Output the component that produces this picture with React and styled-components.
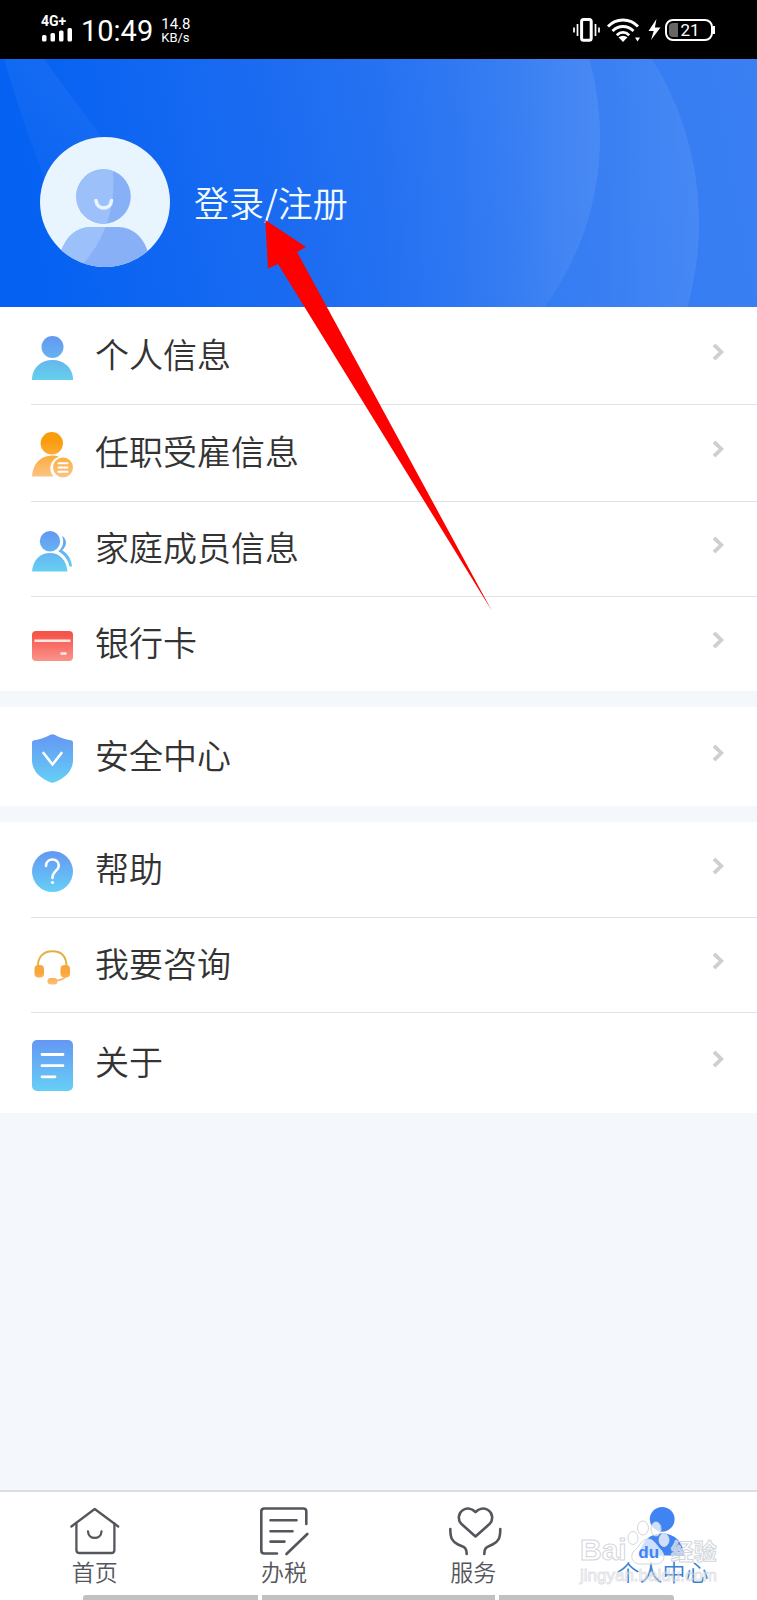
import React from 'react'
import styled, { createGlobalStyle } from 'styled-components'

const GlobalStyle = createGlobalStyle`
    * {
        box-sizing: border-box;
    }
    body {
        margin: 0;
        background: #f4f7fb;
        font-family: "Noto Sans CJK SC", "Noto Sans", sans-serif;
    }
    svg {
        display: block;
    }
`

const BlueGradient = ({ id }) => (
    <linearGradient id={id} x1="0" y1="0" x2="0" y2="1">
        <stop offset="0" stopColor="#6497f3" />
        <stop offset="1" stopColor="#66cff6" />
    </linearGradient>
)

const PersonIcon = () => (
    <svg width="42" height="44" viewBox="0 0 42 44">
        <defs>
            <linearGradient id="person" gradientUnits="userSpaceOnUse" x1="0" y1="0" x2="0" y2="44">
                <stop offset="0" stopColor="#6497f3" />
                <stop offset="1" stopColor="#66d0ea" />
            </linearGradient>
        </defs>
        <g fill="url(#person)">
            <circle cx="20.5" cy="11" r="11" />
            <path d="M0 44v-2C1 31 9.500 24 20.500 24S40 31 41 42v2z" />
        </g>
    </svg>
)

const JobIcon = () => (
    <svg width="42" height="46" viewBox="0 0 42 46">
        <defs>
            <linearGradient id="job" gradientUnits="userSpaceOnUse" x1="0" y1="0" x2="0" y2="46">
                <stop offset="0.2" stopColor="#fa9d0c" />
                <stop offset="1" stopColor="#fbc588" />
            </linearGradient>
        </defs>
        <g fill="url(#job)">
            <circle cx="19.8" cy="11.3" r="11.2" />
            <path d="M0 44.500C.5 32 9 23.500 20 23.500c3 0 5 .4 7 1.200a12 12 0 0 0-5.500 19.800z" />
            <circle cx="31" cy="35.500" r="10" />
        </g>
        <path d="M26.500 31.300h9M26.500 35.500h9M26.500 39.700h9" stroke="#fff" strokeWidth="2" strokeLinecap="round" />
    </svg>
)

const FamilyIcon = () => (
    <svg width="42" height="41" viewBox="0 0 42 41">
        <defs>
            <linearGradient id="family" gradientUnits="userSpaceOnUse" x1="0" y1="0" x2="0" y2="41">
                <stop offset="0" stopColor="#6497f3" />
                <stop offset="1" stopColor="#66d0f2" />
            </linearGradient>
        </defs>
        <g fill="url(#family)">
            <circle cx="18" cy="10.300" r="10.200" />
            <path d="M0 40.500C1 29 8 22 18 22s16.500 7.500 17.500 18.500z" />
            <path d="M30 4.800c5.300 3.600 5.300 10 .2 14.500C36 23 39.500 28.500 40 35.500h-2.500C36 28.500 32 23.500 26.300 20.300 31 16.500 32.500 11 30 4.800z" />
        </g>
    </svg>
)

const CardIcon = () => (
    <svg width="42" height="30" viewBox="0 0 42 30">
        <defs>
            <linearGradient id="card" x1="0" y1="0" x2="0" y2="1">
                <stop offset="0.1" stopColor="#f65349" />
                <stop offset="1" stopColor="#fa948b" />
            </linearGradient>
        </defs>
        <rect width="41" height="30" rx="4" fill="url(#card)" />
        <path d="M2.500 9.800h36" stroke="#fde9e4" strokeWidth="2.600" />
        <path d="M28.500 22.500h6" stroke="#fde9e4" strokeWidth="2.600" />
    </svg>
)

const ShieldIcon = () => (
    <svg width="42" height="49" viewBox="0 0 42 49">
        <defs><BlueGradient id="shield" /></defs>
        <path d="M18.500.7q2-.8 4 0C28 3.500 33 5.300 39 6.300q2 .3 2 2.200v18C41 37 32 45 22 48.500q-1.500.5-3 0C9 45 0 37 0 26.500v-18q0-1.900 2-2.200C8 5.300 13 3.500 18.500.7z" fill="url(#shield)" />
        <path d="M11.500 19l9 11.500 9-11.500" fill="none" stroke="#fff" strokeWidth="2.600" strokeLinecap="round" />
    </svg>
)

const HelpIcon = () => (
    <svg width="42" height="41" viewBox="0 0 42 41">
        <defs><BlueGradient id="help" /></defs>
        <circle cx="20.500" cy="20.500" r="20.500" fill="url(#help)" />
        <path d="M14 15c0-8.500 12.800-8.500 12.800-.5 0 5.500-6.300 5-6.300 12.500" fill="none" stroke="#fff" strokeWidth="2.600" strokeLinecap="round" />
        <circle cx="20.500" cy="31.500" r="1.600" fill="#fff" />
    </svg>
)

const HeadsetIcon = () => (
    <svg width="42" height="35" viewBox="0 0 42 35">
        <defs>
            <linearGradient id="headset" gradientUnits="userSpaceOnUse" x1="0" y1="0" x2="0" y2="35">
                <stop offset="0.2" stopColor="#e8a93a" />
                <stop offset="0.65" stopColor="#fca63c" />
                <stop offset="1" stopColor="#fcc07c" />
            </linearGradient>
        </defs>
        <path d="M5.800 17C5.800 7 11 1.200 20.500 1.200S34.500 7 34.500 17" fill="none" stroke="#e6ae45" strokeWidth="1.900" />
        <path d="M34 26c-1.500 2.500-5 4-9 4.500" fill="none" stroke="#fbb566" strokeWidth="1.700" />
        <g fill="url(#headset)">
            <rect x="2.500" y="15" width="9.500" height="12.500" rx="4" />
            <rect x="28.500" y="15" width="9.500" height="12.500" rx="4" />
            <rect x="15.500" y="28" width="10" height="6.500" rx="3.200" />
        </g>
    </svg>
)

const AboutIcon = () => (
    <svg width="42" height="51" viewBox="0 0 42 51">
        <defs><BlueGradient id="about" /></defs>
        <rect width="41" height="51" rx="5" fill="url(#about)" />
        <path d="M10 14.500h21M10 25.700h21M10 36.800h13" stroke="#fff" strokeWidth="2.800" strokeLinecap="round" />
    </svg>
)

const Chevron = () => (
    <svg width="12" height="18" viewBox="0 0 12 18">
        <path d="M2 1.800L9.300 9 2 16.200" fill="none" stroke="#cfcfcf" strokeWidth="3.800" />
    </svg>
)

const HomeIcon = () => (
    <svg width="54" height="48" viewBox="0 0 54 48" fill="none" stroke="#55565c" strokeWidth="2.300" strokeLinecap="round" strokeLinejoin="round">
        <path d="M3.400 19.500L26.700 2l23.500 17.500" />
        <path d="M8.400 16.500V43q0 3 3 3h32q3 0 3-3V16.500" />
        <path d="M20 24.500c.5 8.500 13 8.500 13.500 0" />
    </svg>
)

const TaxIcon = () => (
    <svg width="54" height="48" viewBox="0 0 54 48" fill="none" stroke="#55565c" strokeWidth="2.600" strokeLinecap="round" strokeLinejoin="round">
        <path d="M49.300 17V4.500q0-3-3-3h-39q-3 0-3 3v39q0 3 3 3H20" />
        <path d="M13.500 13.200h26M13.500 24.300h22M13.500 34.600h14M50.300 27L29.500 47" />
    </svg>
)

const ServiceIcon = () => (
    <svg width="54" height="48" viewBox="0 0 54 48" fill="none" stroke="#55565c" strokeWidth="2.600" strokeLinecap="round" strokeLinejoin="round">
        <path d="M29.500 29.500L15.500 17c-4-4-3.500-11 1.500-14 4-2.500 9-1.500 12.500 2C33 1.500 38 .500 42 3c5 3 5.500 10 1.500 14z" />
        <path d="M4.300 22c0 9 1.700 12.500 7.700 15.500 5 2.500 8.700 2 8.700 9.500M54.300 22c0 9-1.700 12.500-7.700 15.500-5 2.500-8.300 2-8.300 9.500" />
    </svg>
)

const MineIcon = () => (
    <svg width="54" height="48" viewBox="0 0 54 48" fill="#4083f2">
        <circle cx="27.200" cy="12.300" r="12.400" />
        <path d="M4.500 48.500C6 34.500 14.500 26.500 27 26.500S48 34.500 49.500 48.500z" />
    </svg>
)

const Waves = () => (
    <HeaderArt viewBox="0 0 757 248" preserveAspectRatio="none" aria-hidden="true">
        <defs>
            <linearGradient id="wave" x1="0" y1="0" x2="1" y2="0">
                <stop offset="0.6" stopColor="#fff" stopOpacity="0" />
                <stop offset="0.85" stopColor="#fff" stopOpacity="0.03" />
                <stop offset="1" stopColor="#fff" stopOpacity="0.08" />
            </linearGradient>
            <linearGradient id="beam" x1="0" y1="0" x2="0" y2="1">
                <stop offset="0" stopColor="#fff" stopOpacity="0.05" />
                <stop offset="1" stopColor="#fff" stopOpacity="0" />
            </linearGradient>
        </defs>
        <circle cx="389" cy="164" r="310" fill="url(#wave)" />
        <circle cx="311" cy="78" r="289" fill="url(#wave)" />
        <path d="M4 0h40l56 76 10 172q-60-90-106-248z" fill="url(#beam)" />
    </HeaderArt>
)

const Avatar = () => (
    <svg width="130" height="130" viewBox="0 0 130 130">
        <defs>
            <clipPath id="round"><circle cx="65" cy="65" r="65" /></clipPath>
            <clipPath id="bust">
                <circle cx="63.500" cy="59.500" r="27.300" />
                <path d="M19 130c0-24 14-40 32-40h27c18 0 32 16 32 40z" />
            </clipPath>
        </defs>
        <g clipPath="url(#round)">
            <rect width="130" height="130" fill="#e8f4fe" />
            <g clipPath="url(#bust)">
                <rect width="130" height="130" fill="#87b0f7" />
                <path d="M0 0h65c15 40 12 92-25 130H0z" fill="#9cc1fa" />
            </g>
        </g>
        <path d="M56 63.500c1 10 14.500 10 15.500 0" fill="none" stroke="#eaf4fe" strokeWidth="3.600" strokeLinecap="round" />
    </svg>
)

const Signal = () => (
    <svg width="31" height="14" viewBox="0 0 31 14" fill="#fff">
        <rect x="1" y="7" width="4.500" height="6.500" rx="1.500" />
        <rect x="9.500" y="5" width="4.500" height="8.500" rx="1.500" />
        <rect x="18" y="2.500" width="4.500" height="11" rx="1.500" />
        <rect x="26.500" y="0" width="4.500" height="13.500" rx="1.500" />
    </svg>
)

const StatusIcons = () => (
    <svg width="88" height="26" viewBox="0 0 88 26" aria-hidden="true">
        <rect x="8.600" y="2.600" width="9.600" height="20.600" rx="2" fill="none" stroke="#fff" strokeWidth="3" />
        <path d="M4.500 7v12M1 10.500v5M22.500 7v12M26 10.500v5" stroke="#fff" strokeWidth="1.700" />
        <g fill="none" stroke="#fff" strokeWidth="2.800">
            <path d="M35 9.500C43 .8 57 .8 65 9.500" />
            <path d="M39.500 14C45.500 8 54.500 8 60.500 14" />
            <path d="M43.800 18.200c3.700-3.700 8.700-3.700 12.400 0" />
        </g>
        <path d="M45.500 20.300q4.500-3 9 0L50 25z" fill="#fff" />
        <path d="M62 20.500h5l-2.500 4z" fill="#fff" />
        <path d="M83.500 2L75.500 14h5.200l-2.700 9 9.500-12.500h-5.600z" fill="#fff" />
    </svg>
)

const RedArrow = () => (
    <Pointer width="228" height="392" viewBox="265 220 228 392" aria-hidden="true">
        <path d="M265.300 220L306 247l-9 5 195 359-214-347-10 4.500z" fill="#fe0000" />
    </Pointer>
)

const groups = [
    [
        { label: '个人信息', Icon: PersonIcon, height: 97 },
        { label: '任职受雇信息', Icon: JobIcon, height: 97 },
        { label: '家庭成员信息', Icon: FamilyIcon },
        { label: '银行卡', Icon: CardIcon },
    ],
    [
        { label: '安全中心', Icon: ShieldIcon, height: 99 },
    ],
    [
        { label: '帮助', Icon: HelpIcon },
        { label: '我要咨询', Icon: HeadsetIcon },
        { label: '关于', Icon: AboutIcon, height: 101 },
    ],
]

const tabs = [
    { label: '首页', Icon: HomeIcon },
    { label: '办税', Icon: TaxIcon },
    { label: '服务', Icon: ServiceIcon },
    { label: '个人中心', Icon: MineIcon, active: true },
]

const App = () => {
    return (
        <Page>
            <GlobalStyle />
            <StatusBar>
                <Network>
                    <span>4G+</span>
                    <Signal />
                </Network>
                <Clock>10:49</Clock>
                <Speed>
                    <SpeedValue>14.8</SpeedValue>
                    <SpeedUnit>KB/s</SpeedUnit>
                </Speed>
                <StatusIcons />
                <Battery>
                    <BatteryFill />
                    21
                </Battery>
                <BatteryTip />
            </StatusBar>
            <Header>
                <Waves />
                <Avatar />
                <LoginButton type="button">登录/注册</LoginButton>
            </Header>
            <Main>
                {groups.map((items, i) => (
                    <Group key={i}>
                        {items.map(({ label, Icon, height }) => (
                            <Item key={label} $height={height}>
                                <ItemLink href="#">
                                    <ItemIcon><Icon /></ItemIcon>
                                    <ItemLabel>{label}</ItemLabel>
                                    <ItemArrow><Chevron /></ItemArrow>
                                </ItemLink>
                            </Item>
                        ))}
                    </Group>
                ))}
            </Main>
            <Footer>
                <Tabs>
                    {tabs.map(({ label, Icon, active }) => (
                        <Tab key={label} href="#" $active={active}>
                            <Icon />
                            <span>{label}</span>
                        </Tab>
                    ))}
                </Tabs>
                <GestureBar>
                    <Segment $grow={3} />
                    <Segment $grow={4} />
                    <Segment $grow={3} />
                </GestureBar>
                <Watermark>
                    <Brand>
                        <span>Bai</span>
                        <Paw />
                        <BrandCn>经验</BrandCn>
                    </Brand>
                    <Site>jingyan.baidu.com</Site>
                </Watermark>
            </Footer>
            <RedArrow />
        </Page>
    )
}

export default App

const Paw = () => (
    <PawBox>
        <svg width="44" height="46" viewBox="0 0 44 46" fill="#fff" fillOpacity="0.75" stroke="#d3d6dc" strokeWidth="1">
            <ellipse cx="6" cy="18" rx="5" ry="6.500" />
            <ellipse cx="16" cy="8" rx="5.500" ry="7" />
            <ellipse cx="29" cy="9" rx="5" ry="7" />
            <ellipse cx="37" cy="20" rx="5" ry="6.500" />
            <path d="M21 19c6 0 8 6 13 11 6 7 2 14-5 14H13c-7 0-11-7-6-13 6-5 8-12 14-12z" />
        </svg>
        <PawText>du</PawText>
    </PawBox>
)

const Page = styled.div`
    position: relative;
    display: flex;
    flex-direction: column;
    min-height: 100vh;
    overflow: hidden;
`

const StatusBar = styled.div`
    display: flex;
    align-items: center;
    height: 59px;
    padding: 0 42px 0 41px;
    background: #000;
    color: #fff;
    font-family: Roboto, sans-serif;
`

const Network = styled.div`
    display: flex;
    flex-direction: column;
    width: 31px;
    padding-bottom: 2px;
    font-size: 14px;
    font-weight: 700;
    line-height: 13px;
`

const Clock = styled.time`
    margin-left: 9px;
    padding-top: 2px;
    font-size: 29px;
    line-height: 32px;
`

const Speed = styled.div`
    display: flex;
    flex-direction: column;
    flex: 1;
    margin-left: 8px;
`

const SpeedValue = styled.span`
    font-size: 15px;
    line-height: 16px;
`

const SpeedUnit = styled.span`
    font-size: 13px;
    line-height: 12px;
`

const Battery = styled.div`
    position: relative;
    display: flex;
    align-items: center;
    justify-content: center;
    width: 48px;
    height: 22px;
    margin-left: 4px;
    padding-left: 2px;
    border: 2px solid #fff;
    border-radius: 8px;
    font-size: 17px;
`

const BatteryFill = styled.span`
    position: absolute;
    top: 2px;
    bottom: 2px;
    left: 2px;
    width: 9px;
    border-radius: 4px 0 0 4px;
    background: #666;
`

const BatteryTip = styled.span`
    width: 2px;
    height: 8px;
    background: #fff;
`

const Header = styled.header`
    position: relative;
    display: flex;
    align-items: center;
    gap: 24px;
    height: 248px;
    padding: 38px 40px 0;
    background: linear-gradient(80deg, #0461f2 5%, #1d6cf1 40%, #317af3 70%, #3a80f3);
`

const HeaderArt = styled.svg`
    position: absolute;
    inset: 0;
    width: 100%;
    height: 100%;

    & ~ * {
        position: relative;
    }
`

const LoginButton = styled.button`
    padding: 0;
    border: 0;
    background: none;
    color: #f1fbff;
    font-family: inherit;
    font-size: 35px;
    font-weight: 350;
    line-height: 48px;
    cursor: pointer;
`

const Main = styled.main`
    display: flex;
    flex: 1;
    flex-direction: column;
    gap: 16px;
`

const Group = styled.ul`
    margin: 0;
    padding: 0 0 0 31px;
    background: #fff;
    list-style: none;
`

const Item = styled.li`
    display: flex;
    height: ${({ $height = 95 }) => $height}px;

    & + & {
        border-top: 1px solid #e2e2e4;
    }
`

const ItemLink = styled.a`
    display: flex;
    flex: 1;
    align-items: center;
    padding: 0 33px 0 1px;
    color: #333;
    text-decoration: none;
`

const ItemIcon = styled.span`
    padding-top: 4px;
`

const ItemLabel = styled.span`
    flex: 1;
    margin-left: 21px;
    padding-bottom: 4px;
    font-size: 34px;
    font-weight: 350;
    line-height: 48px;
`

const ItemArrow = styled.span`
    padding-bottom: 8px;
`

const Footer = styled.footer`
    position: relative;
    border-top: 2px solid #dcdde1;
    background: #fff;
`

const Tabs = styled.nav`
    display: grid;
    grid-template-columns: repeat(4, 1fr);
    padding: 15px 0 8px;
`

const Tab = styled.a`
    display: flex;
    flex-direction: column;
    align-items: center;
    color: ${({ $active }) => ($active ? '#3a7fd0' : '#55565c')};
    font-size: 23px;
    font-weight: 350;
    line-height: 32px;
    text-decoration: none;

    svg {
        overflow: visible;
    }
`

const GestureBar = styled.div`
    display: flex;
    gap: 4px;
    width: 78%;
    height: 5px;
    margin: 0 auto;
    border-radius: 3px 3px 0 0;
    overflow: hidden;
`

const Segment = styled.span`
    flex: ${({ $grow }) => $grow};
    background: #c1c1c1;
`

const Watermark = styled.div`
    position: absolute;
    right: 40px;
    bottom: 14px;
    color: rgba(255, 255, 255, 0.6);
    font-family: "Liberation Sans", sans-serif;
    -webkit-text-stroke: 1px #d3d6dc;
    pointer-events: none;
`

const Brand = styled.div`
    display: flex;
    align-items: flex-end;
    font-size: 30px;
    font-weight: 700;
    line-height: 32px;
`

const BrandCn = styled.span`
    font-family: "Noto Sans CJK SC", sans-serif;
    font-size: 23px;
`

const PawBox = styled.span`
    position: relative;
`

const PawText = styled.span`
    position: absolute;
    right: 0;
    bottom: 4px;
    left: 0;
    color: #4083f2;
    font-size: 17px;
    line-height: 18px;
    text-align: center;
    -webkit-text-stroke: 0;
`

const Site = styled.div`
    color: rgba(255, 255, 255, 0.2);
    font-size: 17px;
    line-height: 20px;
    -webkit-text-stroke-color: rgba(211, 214, 220, 0.7);
`

const Pointer = styled.svg`
    position: absolute;
    top: 220px;
    left: 265px;
    pointer-events: none;
`
